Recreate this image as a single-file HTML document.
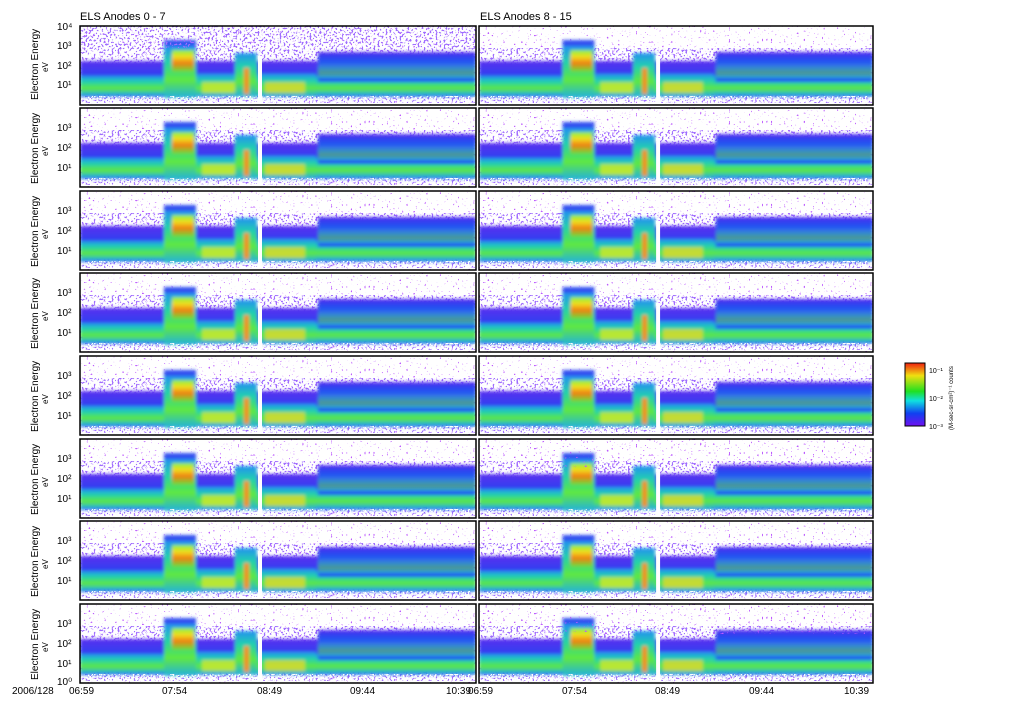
<!DOCTYPE html>
<html><head><meta charset="utf-8"><style>
html,body{margin:0;padding:0;background:#fff;width:1024px;height:708px;overflow:hidden}
svg text{font-family:"Liberation Sans",sans-serif;fill:#000}
</style></head><body>
<svg width="1024" height="708" xmlns="http://www.w3.org/2000/svg" xmlns:xlink="http://www.w3.org/1999/xlink">
<defs>
<filter id="sp" x="0" y="0" width="100%" height="100%">
<feTurbulence type="fractalNoise" baseFrequency="0.45" numOctaves="1" seed="4"/>
<feColorMatrix type="matrix" values="0 0 0 0 0.5  0 0 0 0 0.1  0 0 0 0 1  16 0 0 0 -10.8"/>
<feComposite operator="in" in2="SourceGraphic"/>
</filter>
<filter id="sp2" x="0" y="0" width="100%" height="100%">
<feTurbulence type="fractalNoise" baseFrequency="0.5" numOctaves="1" seed="9"/>
<feColorMatrix type="matrix" values="0 0 0 0 0.35  0 0 0 0 0.15  0 0 0 0 1  12 0 0 0 -6.6"/>
<feComposite operator="in" in2="SourceGraphic"/>
</filter>
<filter id="wh" x="0" y="0" width="100%" height="100%">
<feTurbulence type="fractalNoise" baseFrequency="0.6" numOctaves="1" seed="2"/>
<feColorMatrix type="matrix" values="0 0 0 0 1  0 0 0 0 1  0 0 0 0 1  14 0 0 0 -7.5"/>
<feComposite operator="in" in2="SourceGraphic"/>
</filter>
<filter id="bl1"><feGaussianBlur stdDeviation="1.5"/></filter>
<linearGradient id="bl" x1="0" y1="0" x2="0" y2="1">
<stop offset="0" stop-color="#5a30f0"/><stop offset="0.4" stop-color="#3040f0"/><stop offset="1" stop-color="#2060f0"/></linearGradient>
<linearGradient id="gr" x1="0" y1="0" x2="0" y2="1">
<stop offset="0" stop-color="#2090f0"/><stop offset="0.3" stop-color="#20d0b0"/><stop offset="0.65" stop-color="#60e840"/><stop offset="1" stop-color="#20b0e0"/></linearGradient>
<linearGradient id="hot" x1="0" y1="0" x2="0" y2="1">
<stop offset="0" stop-color="#80f040"/><stop offset="0.3" stop-color="#f0e020"/><stop offset="0.6" stop-color="#f08010"/><stop offset="1" stop-color="#60e040"/></linearGradient>
<linearGradient id="cb" x1="0" y1="0" x2="0" y2="1">
<stop offset="0" stop-color="#f02010"/><stop offset="0.2" stop-color="#f0e010"/><stop offset="0.45" stop-color="#20e020"/><stop offset="0.6" stop-color="#10e0e0"/><stop offset="0.8" stop-color="#1040f0"/><stop offset="1" stop-color="#7010f0"/></linearGradient>
<g id="p">
<rect x="0" y="0" width="396" height="79" fill="#fff"/>
<rect x="0" y="0" width="396" height="79" fill="#60f" filter="url(#sp)"/>
<rect x="0" y="22" width="396" height="55" fill="#40f" filter="url(#sp2)"/>
<g filter="url(#bl1)">
<rect x="0" y="35" width="396" height="36" fill="url(#bl)"/>
<rect x="0" y="50" width="396" height="19" fill="url(#gr)"/>
<rect x="238" y="26" width="158" height="12" fill="url(#bl)"/>
<rect x="238" y="38" width="158" height="14" fill="url(#gr)" opacity="0.55"/>
<rect x="238" y="52" width="158" height="4" fill="#2050f0"/>
<rect x="84" y="14" width="32" height="20" fill="#3050f0"/>
<rect x="84" y="20" width="32" height="52" fill="url(#gr)"/>
<rect x="92" y="24" width="22" height="22" fill="url(#hot)"/>
<rect x="116" y="48" width="120" height="22" fill="url(#gr)"/>
<rect x="122" y="56" width="45" height="11" fill="#d8e828" opacity="0.75"/>
<rect x="185" y="56" width="40" height="11" fill="#e8d828" opacity="0.75"/>
<rect x="155" y="27" width="22" height="44" fill="url(#gr)"/>
<rect x="164" y="42" width="5" height="26" fill="#f09020"/>
</g>
<rect x="178" y="30" width="4" height="49" fill="#fff"/>
<rect x="0" y="70" width="396" height="9" fill="#fff" filter="url(#wh)"/>
</g>
</defs>
<text x="80" y="20" font-size="11">ELS Anodes 0 - 7</text>
<text x="480" y="20" font-size="11">ELS Anodes 8 - 15</text>
<g>
<svg x="80" y="26" width="396" height="79" viewBox="0 0 396 79"><use xlink:href="#p"/><rect width="396" height="22" fill="#60f" filter="url(#sp2)"/></svg>
<svg x="80" y="108" width="396" height="79" viewBox="0 0 396 79"><use xlink:href="#p"/></svg>
<svg x="80" y="191" width="396" height="79" viewBox="0 0 396 79"><use xlink:href="#p"/></svg>
<svg x="80" y="273" width="396" height="79" viewBox="0 0 396 79"><use xlink:href="#p"/></svg>
<svg x="80" y="356" width="396" height="79" viewBox="0 0 396 79"><use xlink:href="#p"/></svg>
<svg x="80" y="439" width="396" height="79" viewBox="0 0 396 79"><use xlink:href="#p"/></svg>
<svg x="80" y="521" width="396" height="79" viewBox="0 0 396 79"><use xlink:href="#p"/></svg>
<svg x="80" y="604" width="396" height="79" viewBox="0 0 396 79"><use xlink:href="#p"/></svg>
<svg x="479" y="26" width="394" height="79" viewBox="0 0 396 79" preserveAspectRatio="none"><use xlink:href="#p"/></svg>
<svg x="479" y="108" width="394" height="79" viewBox="0 0 396 79" preserveAspectRatio="none"><use xlink:href="#p"/></svg>
<svg x="479" y="191" width="394" height="79" viewBox="0 0 396 79" preserveAspectRatio="none"><use xlink:href="#p"/></svg>
<svg x="479" y="273" width="394" height="79" viewBox="0 0 396 79" preserveAspectRatio="none"><use xlink:href="#p"/></svg>
<svg x="479" y="356" width="394" height="79" viewBox="0 0 396 79" preserveAspectRatio="none"><use xlink:href="#p"/></svg>
<svg x="479" y="439" width="394" height="79" viewBox="0 0 396 79" preserveAspectRatio="none"><use xlink:href="#p"/><rect width="396" height="28" fill="#60f" filter="url(#sp)"/></svg>
<svg x="479" y="521" width="394" height="79" viewBox="0 0 396 79" preserveAspectRatio="none"><use xlink:href="#p"/></svg>
<svg x="479" y="604" width="394" height="79" viewBox="0 0 396 79" preserveAspectRatio="none"><use xlink:href="#p"/><rect width="396" height="30" fill="#60f" filter="url(#sp)"/></svg>
</g>
<g fill="none" stroke="#000" stroke-width="1.5">
<rect x="80" y="26" width="396" height="79"/><rect x="80" y="108" width="396" height="79"/><rect x="80" y="191" width="396" height="79"/><rect x="80" y="273" width="396" height="79"/><rect x="80" y="356" width="396" height="79"/><rect x="80" y="439" width="396" height="79"/><rect x="80" y="521" width="396" height="79"/><rect x="80" y="604" width="396" height="79"/>
<rect x="479" y="26" width="394" height="79"/><rect x="479" y="108" width="394" height="79"/><rect x="479" y="191" width="394" height="79"/><rect x="479" y="273" width="394" height="79"/><rect x="479" y="356" width="394" height="79"/><rect x="479" y="439" width="394" height="79"/><rect x="479" y="521" width="394" height="79"/><rect x="479" y="604" width="394" height="79"/>
</g>
<g font-size="10">
<g>
<text transform="translate(38,100) rotate(-90)">Electron Energy</text><text transform="translate(48,72) rotate(-90)" font-size="8">eV</text>
<text x="57" y="30">10⁴</text><text x="57" y="49">10³</text><text x="57" y="69">10²</text><text x="57" y="88">10¹</text>
</g>
<g transform="translate(0,82)"><text transform="translate(38,102) rotate(-90)">Electron Energy</text><text transform="translate(48,74) rotate(-90)" font-size="8">eV</text><text x="57" y="49">10³</text><text x="57" y="69">10²</text><text x="57" y="89">10¹</text></g>
<g transform="translate(0,165)"><text transform="translate(38,102) rotate(-90)">Electron Energy</text><text transform="translate(48,74) rotate(-90)" font-size="8">eV</text><text x="57" y="49">10³</text><text x="57" y="69">10²</text><text x="57" y="89">10¹</text></g>
<g transform="translate(0,247)"><text transform="translate(38,102) rotate(-90)">Electron Energy</text><text transform="translate(48,74) rotate(-90)" font-size="8">eV</text><text x="57" y="49">10³</text><text x="57" y="69">10²</text><text x="57" y="89">10¹</text></g>
<g transform="translate(0,330)"><text transform="translate(38,102) rotate(-90)">Electron Energy</text><text transform="translate(48,74) rotate(-90)" font-size="8">eV</text><text x="57" y="49">10³</text><text x="57" y="69">10²</text><text x="57" y="89">10¹</text></g>
<g transform="translate(0,413)"><text transform="translate(38,102) rotate(-90)">Electron Energy</text><text transform="translate(48,74) rotate(-90)" font-size="8">eV</text><text x="57" y="49">10³</text><text x="57" y="69">10²</text><text x="57" y="89">10¹</text></g>
<g transform="translate(0,495)"><text transform="translate(38,102) rotate(-90)">Electron Energy</text><text transform="translate(48,74) rotate(-90)" font-size="8">eV</text><text x="57" y="49">10³</text><text x="57" y="69">10²</text><text x="57" y="89">10¹</text></g>
<g transform="translate(0,578)"><text transform="translate(38,102) rotate(-90)">Electron Energy</text><text transform="translate(48,74) rotate(-90)" font-size="8">eV</text><text x="57" y="49">10³</text><text x="57" y="69">10²</text><text x="57" y="89">10¹</text><text x="57" y="107">10⁰</text></g>
</g>
<g font-size="10">
<text x="12" y="694">2006/128</text><text x="69" y="694">06:59</text><text x="162" y="694">07:54</text><text x="257" y="694">08:49</text><text x="350" y="694">09:44</text><text x="446" y="694">10:39</text>
<text x="468" y="694">06:59</text><text x="562" y="694">07:54</text><text x="655" y="694">08:49</text><text x="749" y="694">09:44</text><text x="844" y="694">10:39</text>
</g>
<rect x="905" y="363" width="20" height="63" fill="url(#cb)" stroke="#000" stroke-width="1"/>
<g font-size="7"><text x="929" y="373">10⁻¹</text><text x="929" y="401">10⁻²</text><text x="929" y="429">10⁻³</text></g>
<text transform="translate(953,430) rotate(-90)" font-size="6">(M-sec-sr-cm²)⁻¹ counts</text>
</svg>
</body></html>
